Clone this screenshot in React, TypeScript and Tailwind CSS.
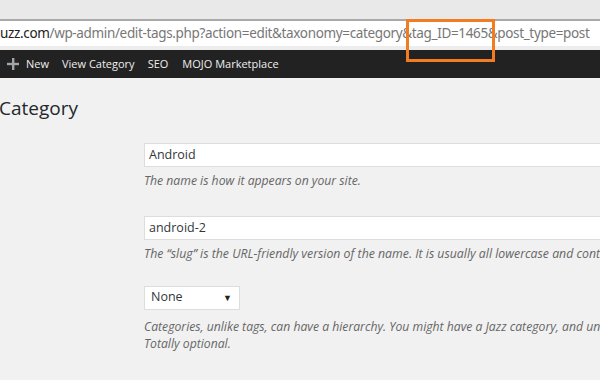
export default function App() {
  const sans = { fontFamily: '"Open Sans", "Noto Sans", sans-serif' }
  return (
    <div className="w-[600px] h-[380px] overflow-hidden bg-[#f1f1f1] flex flex-col" style={sans}>
      {/* browser chrome */}
      <div className="h-[19px] bg-[#e9e9e9] flex-none" />
      <div className="h-[27px] bg-white border-t-2 border-[#a9a9a9] flex items-center flex-none relative">
        <div className="whitespace-nowrap text-[13.5px] text-[#777] tracking-[-0.35px] leading-none" style={{ fontFamily: '"Noto Sans", sans-serif' }}>
          <span className="text-[#222]">uzz.com</span>/wp-admin/edit-tags.php?action=edit&amp;taxonomy=category&amp;tag_ID=1465&amp;post_type=post
        </div>
        <div className="absolute left-[406px] top-[-2px] w-[89px] h-[43px] border-[3px] border-[#f47c20] z-10" />
      </div>
      <div className="h-[4px] bg-[#ededed] flex-none" />
      {/* admin bar */}
      <div className="h-[28px] bg-[#222] flex items-center flex-none text-[11px] text-[#eee] pl-[7px]">
        <svg width="12" height="12" viewBox="0 0 12 12" className="mr-[7px]">
          <rect x="5" y="0" width="2.4" height="12" fill="#a0a5aa" />
          <rect x="0" y="4.8" width="12" height="2.4" fill="#a0a5aa" />
        </svg>
        <span className="mr-[13px]">New</span>
        <span className="mr-[13px]">View Category</span>
        <span className="mr-[14px]">SEO</span>
        <span>MOJO Marketplace</span>
      </div>
      {/* content */}
      <div className="flex-1 relative">
        <h1 className="text-[19px] text-[#23282d] leading-none pt-[21px] ml-[-1px] whitespace-nowrap">Category</h1>
        <div className="pl-[144px] pt-[25px] flex flex-col">
          <div className="h-[24px] bg-white border border-[#ddd] flex items-center pl-[4px] text-[12.5px] text-[#32373c] w-[470px]">
            Android
          </div>
          <p className="italic text-[12.2px] text-[#666] mt-[5px] whitespace-nowrap">The name is how it appears on your site.</p>
          <div className="h-[24px] bg-white border border-[#ddd] flex items-center pl-[4px] text-[12.5px] text-[#32373c] w-[470px] mt-[26px]">
            android-2
          </div>
          <p className="italic text-[12.3px] text-[#666] mt-[5px] whitespace-nowrap">
            The “slug” is the URL-friendly version of the name. It is usually all lowercase and contains only letters, numbers, and hyphens.
          </p>
          <div className="h-[24px] bg-white border border-[#ddd] flex items-center justify-between pl-[6px] pr-[7px] text-[12.5px] text-[#32373c] w-[96px] mt-[22px]">
            <span>None</span>
            <span className="text-[9px] text-[#222]">▼</span>
          </div>
          <p className="italic text-[12.2px] text-[#666] mt-[8px] whitespace-nowrap leading-[17px]">
            Categories, unlike tags, can have a hierarchy. You might have a Jazz category, and under that have children categories for Bebop and Big Band.
            <br />
            Totally optional.
          </p>
        </div>
      </div>
    </div>
  )
}
